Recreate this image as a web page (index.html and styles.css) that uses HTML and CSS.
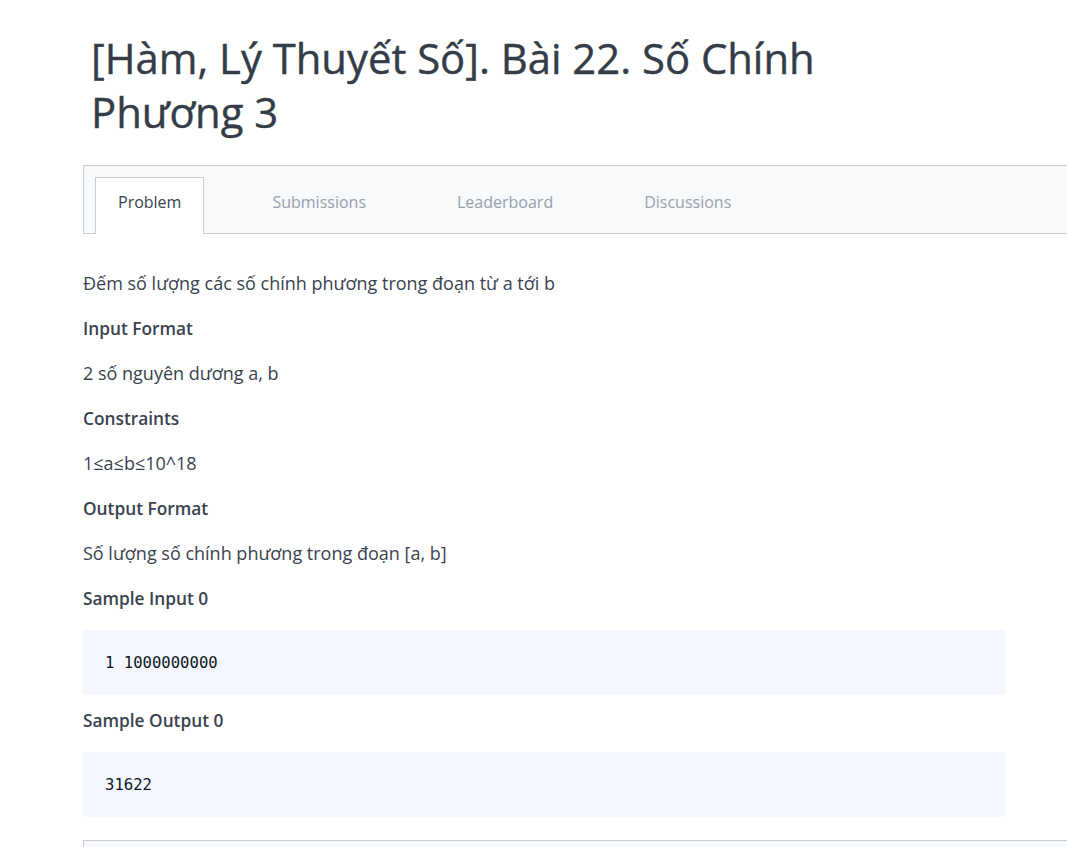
FILE: index.html
```html
<!DOCTYPE html>
<html lang="vi">
<head>
<meta charset="utf-8">
<title>Bài 22. Số Chính Phương 3</title>
<link rel="stylesheet" href="styles.css">
</head>
<body>
<div class="page">
  <h1 class="title">[Hàm, Lý Thuyết Số]. Bài 22. Số Chính Phương 3</h1>
  <div class="tabbar">
    <div class="tab active">Problem</div>
    <div class="tab">Submissions</div>
    <div class="tab">Leaderboard</div>
    <div class="tab">Discussions</div>
  </div>
  <div class="content">
    <p class="text first">Đếm số lượng các số chính phương trong đoạn từ a tới b</p>
    <p class="heading">Input Format</p>
    <p class="text">2 số nguyên dương a, b</p>
    <p class="heading">Constraints</p>
    <p class="text">1≤a≤b≤10^18</p>
    <p class="heading">Output Format</p>
    <p class="text">Số lượng số chính phương trong đoạn [a, b]</p>
    <p class="heading">Sample Input 0</p>
    <pre class="code">1 1000000000</pre>
    <p class="heading">Sample Output 0</p>
    <pre class="code">31622</pre>
  </div>
  <div class="footerbox"></div>
</div>
</body>
</html>
```
FILE: styles.css
```css
html, body {
  margin: 0;
  padding: 0;
  background: #ffffff;
  overflow: hidden;
}
.page {
  padding-left: 83px;
  font-family: "Open Sans", "Noto Sans", sans-serif;
  color: #39424e;
}
.title {
  margin: 31px 0 0 8px;
  width: 760px;
  font-size: 41.8px;
  line-height: 54px;
  font-weight: 400;
  color: #343c47;
  -webkit-text-stroke: 0.4px #343c47;
}
.tabbar {
  margin-top: 26px;
  width: 1200px;
  height: 69px;
  box-sizing: border-box;
  border: 1px solid #c9cdd5;
  background: #f8f9fa;
  padding: 11px 0 0 11px;
  display: flex;
  align-items: flex-end;
  gap: 45px;
}
.tab {
  height: 57px;
  box-sizing: border-box;
  margin-bottom: -1px;
  padding: 12px 22px 0;
  border: 1px solid transparent;
  border-bottom: none;
  font-size: 16px;
  line-height: 24px;
  font-weight: 500;
  color: #979faf;
}
.tab.active {
  background: #ffffff;
  border-color: #c9cdd5;
  color: #39424e;
}
.content {
  width: 922px;
}
.text, .heading {
  margin: 21px 0 0;
  font-size: 18px;
  line-height: 24px;
}
.text.first {
  margin-top: 37px;
}
.heading {
  font-size: 17.3px;
  font-weight: 600;
  line-height: 25px;
  margin-top: 21px;
}
.heading + .text {
  margin-top: 20px;
}
.code {
  margin: 20px 0 0;
  background: #f4f8fe;
  border-radius: 3px;
  padding: 23px 22px 21px;
  font-family: "DejaVu Sans Mono", monospace;
  font-size: 15.6px;
  line-height: 21px;
  color: #0e141e;
}
.code + .heading {
  margin-top: 13px;
}
.heading + .code {
  margin-top: 19px;
}
.footerbox {
  margin-top: 23px;
  width: 1200px;
  height: 60px;
  border: 1px solid #c9cdd5;
  background: #f8f9fa;
}
```
